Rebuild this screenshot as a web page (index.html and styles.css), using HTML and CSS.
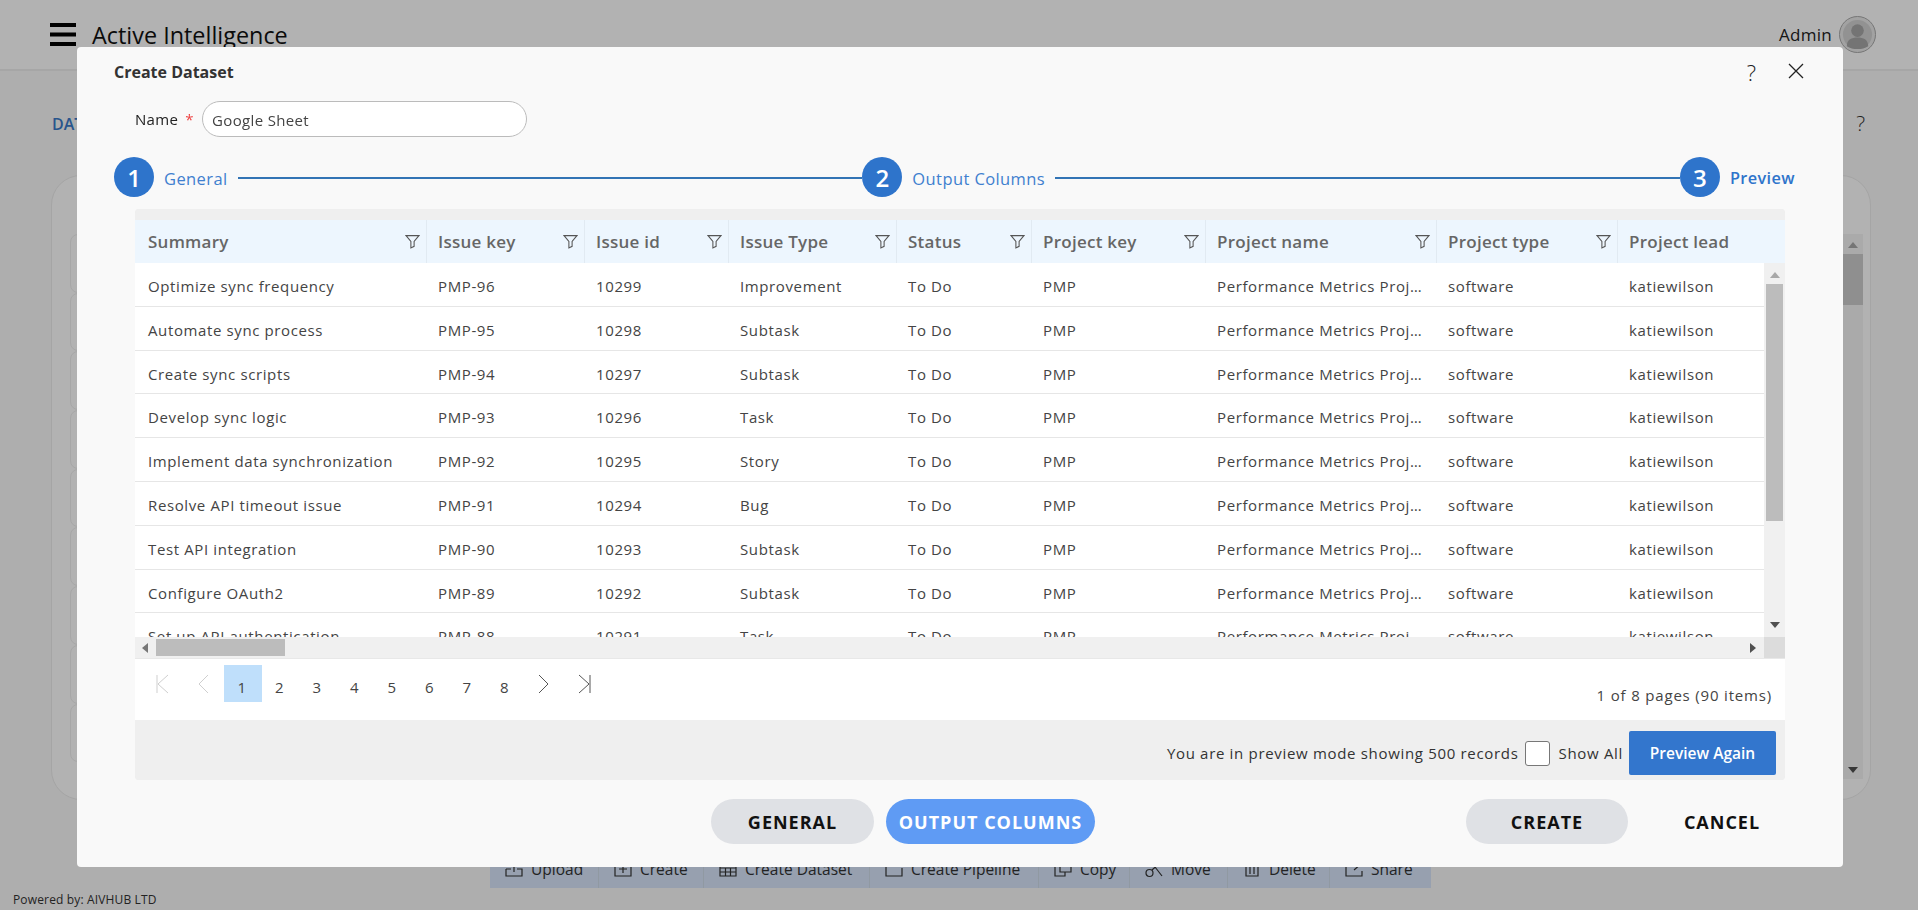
FILE: index.html
```html
<!DOCTYPE html>
<html lang="en">
<head>
<meta charset="utf-8">
<title>Create Dataset</title>
<link rel="stylesheet" href="styles.css">
</head>
<body>
<div class="page">
  <header class="topbar">
    <svg class="burger" viewBox="0 0 26 23"><path d="M0 2h26M0 11.5h26M0 21h26" stroke="#000" stroke-width="4" stroke-linecap="round"/></svg>
    <span class="brand">Active Intelligence</span>
    <span class="user">Admin</span>
    <span class="avatar"><svg viewBox="0 0 36 36"><circle cx="18" cy="18" r="15" fill="#d2d2d2"/><circle cx="18" cy="14" r="6.500" fill="#a6a6a6"/><path d="M7 30c0-7 5-9 11-9s11 2 11 9c-3 2-7 3-11 3s-8-1-11-3z" fill="#a6a6a6"/></svg></span>
  </header>
  <div class="crumbs"><span class="crumb-title">DATASETS</span><span class="crumb-help">?</span></div>
  <section class="card">
    <div class="list">
      <div class="list-row"></div><div class="list-row"></div><div class="list-row"></div><div class="list-row"></div><div class="list-row"></div><div class="list-row"></div><div class="list-row"></div><div class="list-row"></div><div class="list-row"></div>
    </div>
    <div class="card-scroll"><span class="arrow up dim"></span><span class="card-thumb"></span><span class="arrow down"></span></div>
  </section>
  <nav class="toolbar">
    <span class="tool t1"><svg viewBox="0 0 18 18"><path d="M1 9h5M12 9h5v7H1V9M9 12V2M6 5l3-3 3 3"/></svg>Upload</span>
    <span class="tool t2"><svg viewBox="0 0 18 18"><path d="M1 2h16v14H1zM9 5v8M5 9h8"/></svg>Create</span>
    <span class="tool t3"><svg viewBox="0 0 18 18"><path d="M1 3h16v13H1zM1 8h16M1 12h16M6.500 8v8M11.500 8v8"/></svg>Create Dataset</span>
    <span class="tool t4"><svg viewBox="0 0 18 18"><path d="M8 3H1v13h16V8M13 1v6M10 4h6"/></svg>Create Pipeline</span>
    <span class="tool t5"><svg viewBox="0 0 18 18"><path d="M5 6H1v10h10v-4M6 1h11v11H6z"/></svg>Copy</span>
    <span class="tool t6"><svg viewBox="0 0 18 18"><circle cx="4.500" cy="13" r="3.500"/><path d="M7 10l9-8M10 7l7 9"/></svg>Move</span>
    <span class="tool t7"><svg viewBox="0 0 18 18"><path d="M3 3v13h12V3M7 5v9M11 5v9"/></svg>Delete</span>
    <span class="tool t8"><svg viewBox="0 0 18 18"><path d="M6 3H1v13h16v-5M9 10l8-7M12 2h5v5"/></svg>Share</span>
  </nav>
  <footer class="powered">Powered by: AIVHUB LTD</footer>
</div>

<div class="mask"></div>

<div class="modal">
  <div class="modal-head">
    <h1 class="modal-title">Create Dataset</h1>
    <span class="modal-help">?</span>
    <svg class="modal-close" viewBox="0 0 16 16"><path d="M1 1l14 14M15 1L1 15" stroke="#222" stroke-width="1.300" fill="none"/></svg>
  </div>

  <div class="name-row">
    <label class="name-label">Name <span class="req">*</span></label>
    <input class="name-input" type="text" value="Google Sheet">
  </div>

  <div class="stepper">
    <span class="step-num">1</span><span class="step-text">General</span><span class="step-line"></span>
    <span class="step-num">2</span><span class="step-text">Output Columns</span><span class="step-line"></span>
    <span class="step-num">3</span><span class="step-text strong">Preview</span>
  </div>

  <section class="preview">
    <div class="band"></div>
    <div class="grid-wrap">
      <div class="grid">
        <div class="row head">
          <div class="cell">Summary<svg class="filter" viewBox="0 0 14 14"><path d="M1 1.500h12L8.500 7v4.500l-3 1.500V7z"/></svg></div>
          <div class="cell">Issue key<svg class="filter" viewBox="0 0 14 14"><path d="M1 1.500h12L8.500 7v4.500l-3 1.500V7z"/></svg></div>
          <div class="cell">Issue id<svg class="filter" viewBox="0 0 14 14"><path d="M1 1.500h12L8.500 7v4.500l-3 1.500V7z"/></svg></div>
          <div class="cell">Issue Type<svg class="filter" viewBox="0 0 14 14"><path d="M1 1.500h12L8.500 7v4.500l-3 1.500V7z"/></svg></div>
          <div class="cell">Status<svg class="filter" viewBox="0 0 14 14"><path d="M1 1.500h12L8.500 7v4.500l-3 1.500V7z"/></svg></div>
          <div class="cell">Project key<svg class="filter" viewBox="0 0 14 14"><path d="M1 1.500h12L8.500 7v4.500l-3 1.500V7z"/></svg></div>
          <div class="cell">Project name<svg class="filter" viewBox="0 0 14 14"><path d="M1 1.500h12L8.500 7v4.500l-3 1.500V7z"/></svg></div>
          <div class="cell">Project type<svg class="filter" viewBox="0 0 14 14"><path d="M1 1.500h12L8.500 7v4.500l-3 1.500V7z"/></svg></div>
          <div class="cell">Project lead</div>
        </div>
        <div class="rows">
          <div class="row"><div class="cell">Optimize sync frequency</div><div class="cell">PMP-96</div><div class="cell">10299</div><div class="cell">Improvement</div><div class="cell">To Do</div><div class="cell">PMP</div><div class="cell">Performance Metrics Project</div><div class="cell">software</div><div class="cell">katiewilson</div></div>
          <div class="row"><div class="cell">Automate sync process</div><div class="cell">PMP-95</div><div class="cell">10298</div><div class="cell">Subtask</div><div class="cell">To Do</div><div class="cell">PMP</div><div class="cell">Performance Metrics Project</div><div class="cell">software</div><div class="cell">katiewilson</div></div>
          <div class="row"><div class="cell">Create sync scripts</div><div class="cell">PMP-94</div><div class="cell">10297</div><div class="cell">Subtask</div><div class="cell">To Do</div><div class="cell">PMP</div><div class="cell">Performance Metrics Project</div><div class="cell">software</div><div class="cell">katiewilson</div></div>
          <div class="row"><div class="cell">Develop sync logic</div><div class="cell">PMP-93</div><div class="cell">10296</div><div class="cell">Task</div><div class="cell">To Do</div><div class="cell">PMP</div><div class="cell">Performance Metrics Project</div><div class="cell">software</div><div class="cell">katiewilson</div></div>
          <div class="row"><div class="cell">Implement data synchronization</div><div class="cell">PMP-92</div><div class="cell">10295</div><div class="cell">Story</div><div class="cell">To Do</div><div class="cell">PMP</div><div class="cell">Performance Metrics Project</div><div class="cell">software</div><div class="cell">katiewilson</div></div>
          <div class="row"><div class="cell">Resolve API timeout issue</div><div class="cell">PMP-91</div><div class="cell">10294</div><div class="cell">Bug</div><div class="cell">To Do</div><div class="cell">PMP</div><div class="cell">Performance Metrics Project</div><div class="cell">software</div><div class="cell">katiewilson</div></div>
          <div class="row"><div class="cell">Test API integration</div><div class="cell">PMP-90</div><div class="cell">10293</div><div class="cell">Subtask</div><div class="cell">To Do</div><div class="cell">PMP</div><div class="cell">Performance Metrics Project</div><div class="cell">software</div><div class="cell">katiewilson</div></div>
          <div class="row"><div class="cell">Configure OAuth2</div><div class="cell">PMP-89</div><div class="cell">10292</div><div class="cell">Subtask</div><div class="cell">To Do</div><div class="cell">PMP</div><div class="cell">Performance Metrics Project</div><div class="cell">software</div><div class="cell">katiewilson</div></div>
          <div class="row"><div class="cell">Set up API authentication</div><div class="cell">PMP-88</div><div class="cell">10291</div><div class="cell">Task</div><div class="cell">To Do</div><div class="cell">PMP</div><div class="cell">Performance Metrics Project</div><div class="cell">software</div><div class="cell">katiewilson</div></div>
        </div>
      </div>
      <div class="vbar">
        <div class="vbar-head"></div>
        <div class="vtrack"><span class="arrow up dim"></span><span class="vthumb"></span><span class="arrow down"></span></div>
      </div>
    </div>
    <div class="hbar">
      <div class="htrack"><span class="arrow left"></span><span class="hthumb"></span><span class="arrow right"></span></div>
      <div class="corner"></div>
    </div>
    <div class="pager">
      <div class="pages">
        <svg class="pg-icon off" viewBox="0 0 16 20"><path d="M3 1v18M14 1L4 10l10 9"/></svg>
        <svg class="pg-icon off" viewBox="0 0 16 20"><path d="M12 1L3 10l9 9"/></svg>
        <span class="pg on">1</span><span class="pg">2</span><span class="pg">3</span><span class="pg">4</span><span class="pg">5</span><span class="pg">6</span><span class="pg">7</span><span class="pg">8</span>
        <svg class="pg-icon" viewBox="0 0 16 20"><path d="M4 1l9 9-9 9"/></svg>
        <svg class="pg-icon" viewBox="0 0 16 20"><path d="M2 1l10 9-10 9M13 1v18"/></svg>
      </div>
      <span class="pg-info">1 of 8 pages (90 items)</span>
    </div>
    <div class="preview-bar">
      <span>You are in preview mode showing 500 records</span>
      <input class="show-all" type="checkbox">
      <span class="show-label">Show All</span>
      <button class="btn-again">Preview Again</button>
    </div>
  </section>

  <div class="actions">
    <button class="pill first">GENERAL</button>
    <button class="pill blue">OUTPUT COLUMNS</button>
    <button class="pill push">CREATE</button>
    <button class="pill plain">CANCEL</button>
  </div>
</div>
</body>
</html>
```
FILE: styles.css
```css
* { box-sizing: border-box; }
html, body { margin: 0; height: 100%; overflow: hidden; }
body { font-family: "Open Sans", "Noto Sans", sans-serif; color: #222; background: #f9f9f9; }

.page { height: 910px; display: flex; flex-direction: column; }

.topbar { height: 71px; flex: none; background: #fff; border-bottom: 2px solid #eee; display: flex; align-items: center; padding: 0 42px 0 50px; }
.burger { width: 26px; height: 23px; margin-top: -1px; }
.brand { margin-left: 16px; font-size: 23.400px; color: #111; }
.user { margin-left: auto; font-size: 17px; color: #222; letter-spacing: .3px; }
.avatar { width: 37px; height: 37px; margin-left: 7px; border-radius: 50%; border: 1px solid #aaa; background: #e8e8e8; overflow: hidden; display: flex; }
.avatar svg { width: 100%; height: 100%; }

.crumbs { height: 104px; flex: none; display: flex; padding: 38px 53px 0 52px; justify-content: space-between; }
.crumb-title { font-size: 16px; font-weight: 600; color: #3a7ac9; line-height: 30px; }
.crumb-help { font-size: 21px; color: #333; line-height: 26px; font-weight: 300; padding-top: 1px; }

.card { height: 625px; flex: none; margin: 0 47px 0 51px; background: #fff; border: 1px solid #ececec; border-radius: 30px; display: flex; padding: 58px 7px 20px 18px; }
.list { flex: 1; display: flex; flex-direction: column; }
.list-row { height: 58.700px; border: 1px solid #f0f0f0; border-radius: 8px; flex: none; }
.card-scroll { width: 20px; background: #f4f4f4; display: flex; flex-direction: column; align-items: center; position: relative; }
.card-thumb { width: 100%; height: 51px; background: #cdcdcd; margin-top: 6px; }
.card-scroll .arrow.up { margin-top: 8px; }
.card-scroll .arrow.down { margin-top: auto; margin-bottom: 6px; }

.toolbar { height: 39px; flex: none; margin: 49px 487px 0 490px; background: #d8e6fb; display: flex; align-items: center; font-size: 15.500px; color: #333; }
.tool { height: 100%; display: flex; align-items: center; gap: 8px; padding: 0 0 0 15px; border-right: 1px solid #cfdbe9; white-space: nowrap; }
.tool:last-child { border-right: 0; }
.tool svg { width: 18px; height: 18px; flex: none; fill: none; stroke: #333; stroke-width: 1.200; }
.t1 { width: 109px; } .t2 { width: 105px; } .t3 { width: 166px; } .t4 { width: 169px; }
.t5 { width: 91px; } .t6 { width: 98px; } .t7 { width: 102px; } .t8 { width: 100px; }

.powered { height: 22px; flex: none; font-size: 12px; letter-spacing: .15px; padding: 3px 0 0 13px; color: #333; white-space: nowrap; }

.mask { position: fixed; inset: 0; background: rgba(0, 0, 0, .3); }

.modal { position: fixed; left: 77px; top: 47px; width: 1766px; height: 820px; background: #f9f9f9; border-radius: 4px; display: flex; flex-direction: column; }

.modal-head { height: 50px; flex: none; display: flex; align-items: center; padding: 0 39px 0 37px; }
.modal-title { margin: 0; font-size: 16px; font-weight: 700; color: #333; }
.modal-help { margin-left: auto; font-size: 22px; font-weight: 300; line-height: 1; color: #222; }
.modal-close { width: 16px; height: 16px; margin-left: 32px; margin-top: -2px; }

.name-row { margin: 4px 0 0 58px; height: 36px; flex: none; display: flex; align-items: center; }
.name-label { font-size: 15px; letter-spacing: .3px; color: #222; width: 67px; }
.req { color: #e44; margin-left: 3px; }
.name-input { width: 325px; height: 36px; border: 1px solid #bbb; border-radius: 18px; padding: 1px 9px 0; background: #fff; font: 15px "Open Sans", sans-serif; letter-spacing: .35px; color: #444; outline: none; }

.stepper { margin: 20px 48px 0 37px; height: 40px; flex: none; display: flex; align-items: center; }
.step-num { width: 40px; height: 40px; flex: none; border-radius: 50%; background: #2e74cb; color: #fff; display: flex; align-items: center; justify-content: center; font-size: 24px; font-weight: 600; }
.step-text { margin-left: 10px; font-size: 16.500px; letter-spacing: .4px; color: #3f80cf; margin-top: 2px; white-space: nowrap; }
.step-text.strong { font-weight: 600; color: #2e74cb; font-size: 16.300px; }
.step-line { flex: 1; height: 2px; margin: 2px 0 0 10px; background: #3274b5; }

.preview { margin: 12px 58px 0; height: 571px; flex: none; display: flex; flex-direction: column; border-radius: 4px; background: #efefef; overflow: hidden; }
.band { height: 11px; flex: none; background: #efefef; }
.grid-wrap { height: 417px; flex: none; display: flex; overflow: hidden; }
.grid { width: 1629px; flex: none; overflow: hidden; background: #fff; }
.row { display: grid; grid-template-columns: 292px 158px 144px 168px 135px 174px 231px 181px 146px; grid-template-rows: 100%; height: 43.800px; border-bottom: 1px solid #e6e6e6; background: #fff; }
.row .cell { padding: 0 14px 0 11px; font-size: 15px; letter-spacing: .62px; color: #444; min-width: 0; }
.row .cell:first-child { padding-left: 13px; }
.rows .cell { padding-top: 2px; line-height: 42px; white-space: nowrap; overflow: hidden; text-overflow: ellipsis; }
.row.head { height: 43px; background: #edf6fe; border-bottom: 0; }
.row.head .cell { display: flex; align-items: center; font-size: 17px; font-weight: 600; letter-spacing: .25px; color: #666; justify-content: space-between; padding-right: 6px; border-right: 1px solid #e1eaf2; }
.row.head .cell:last-child { border-right: 0; }
.filter { width: 15px; height: 15px; flex: none; fill: none; stroke: #555; stroke-width: 1; }

.vbar { width: 21px; flex: none; display: flex; flex-direction: column; background: #f0f0f0; }
.vbar-head { height: 43px; background: #edf6fe; }
.vtrack { flex: 1; display: flex; flex-direction: column; align-items: center; padding-bottom: 9px; }
.vthumb { width: 17px; height: 237px; margin-top: 6px; background: #bcbcbc; }
.vtrack .arrow.up { margin-top: 9px; }
.vtrack .arrow.down { margin-top: auto; }

.arrow { width: 0; height: 0; flex: none; border-style: solid; border-color: transparent; display: block; }
.arrow.up { border-width: 0 5px 6px; border-bottom-color: #777; }
.arrow.up.dim { border-bottom-color: #a8a8a8; }
.arrow.down { border-width: 6px 5px 0; border-top-color: #505050; }
.arrow.left { border-width: 5px 6px 5px 0; border-right-color: #777; }
.arrow.right { border-width: 5px 0 5px 6px; border-left-color: #505050; }

.hbar { height: 22px; flex: none; display: flex; border-bottom: 1px solid #e8e8e8; }
.htrack { flex: 1; display: flex; align-items: center; background: #f0f0f0; padding: 0 8px 0 7px; }
.hthumb { width: 129px; height: 17px; margin-left: 8px; background: #bcbcbc; }
.htrack .arrow.right { margin-left: auto; }
.corner { width: 21px; background: #dcdcdc; }

.pager { height: 61px; flex: none; background: #fff; display: flex; padding: 6px 13px 0 0; position: relative; }
.pages { display: flex; align-items: center; height: 37px; font-size: 15px; color: #444; }
.pg { width: 37.500px; height: 37px; display: flex; align-items: center; justify-content: center; padding: 6px 2px 0 0; }
.pg.on { background: #bfdffb; }
.pg-icon { width: 16px; height: 20px; flex: none; fill: none; stroke: #555; stroke-width: 1; margin-left: 19px; }
.pg-icon.off { stroke: #cfcfcf; }
.pg-icon:nth-child(2) { margin-left: 26px; margin-right: 12px; }
.pg:nth-child(10) + .pg-icon { margin-left: 11px; }
.pg-icon:last-child { margin-left: 26px; }
.pg-info { margin-left: auto; font-size: 15px; letter-spacing: .82px; color: #444; padding-top: 20px; white-space: nowrap; }

.preview-bar { height: 60px; flex: none; background: #efefef; display: flex; align-items: center; justify-content: flex-end; padding: 6px 9px 0 0; font-size: 15px; letter-spacing: .68px; color: #333; white-space: nowrap; }
.show-all { appearance: none; width: 25px; height: 25px; margin: 0 9px 0 6px; background: #fff; border: 1px solid #777; border-radius: 3px; }
.show-label { margin-right: 6px; }
.btn-again { width: 147px; height: 44px; border: 0; border-radius: 2px; background: #3376cd; color: #fff; font: 600 15.500px "Open Sans", sans-serif; }

.actions { margin: 19px 40px 0 634px; height: 45px; flex: none; display: flex; gap: 12px; }
.pill { min-width: 162px; height: 45px; padding: 0 12px; border: 0; border-radius: 23px; background: #dfe1e5; color: #111; font: 700 18px "Open Sans", sans-serif; letter-spacing: 1px; white-space: nowrap; }
.pill.first { min-width: 163px; }
.pill.blue { background: #5f9bf4; color: #fff; width: 209px; }
.pill.push { margin-left: auto; }
.pill.plain { background: transparent; margin-left: 1px; }
```
